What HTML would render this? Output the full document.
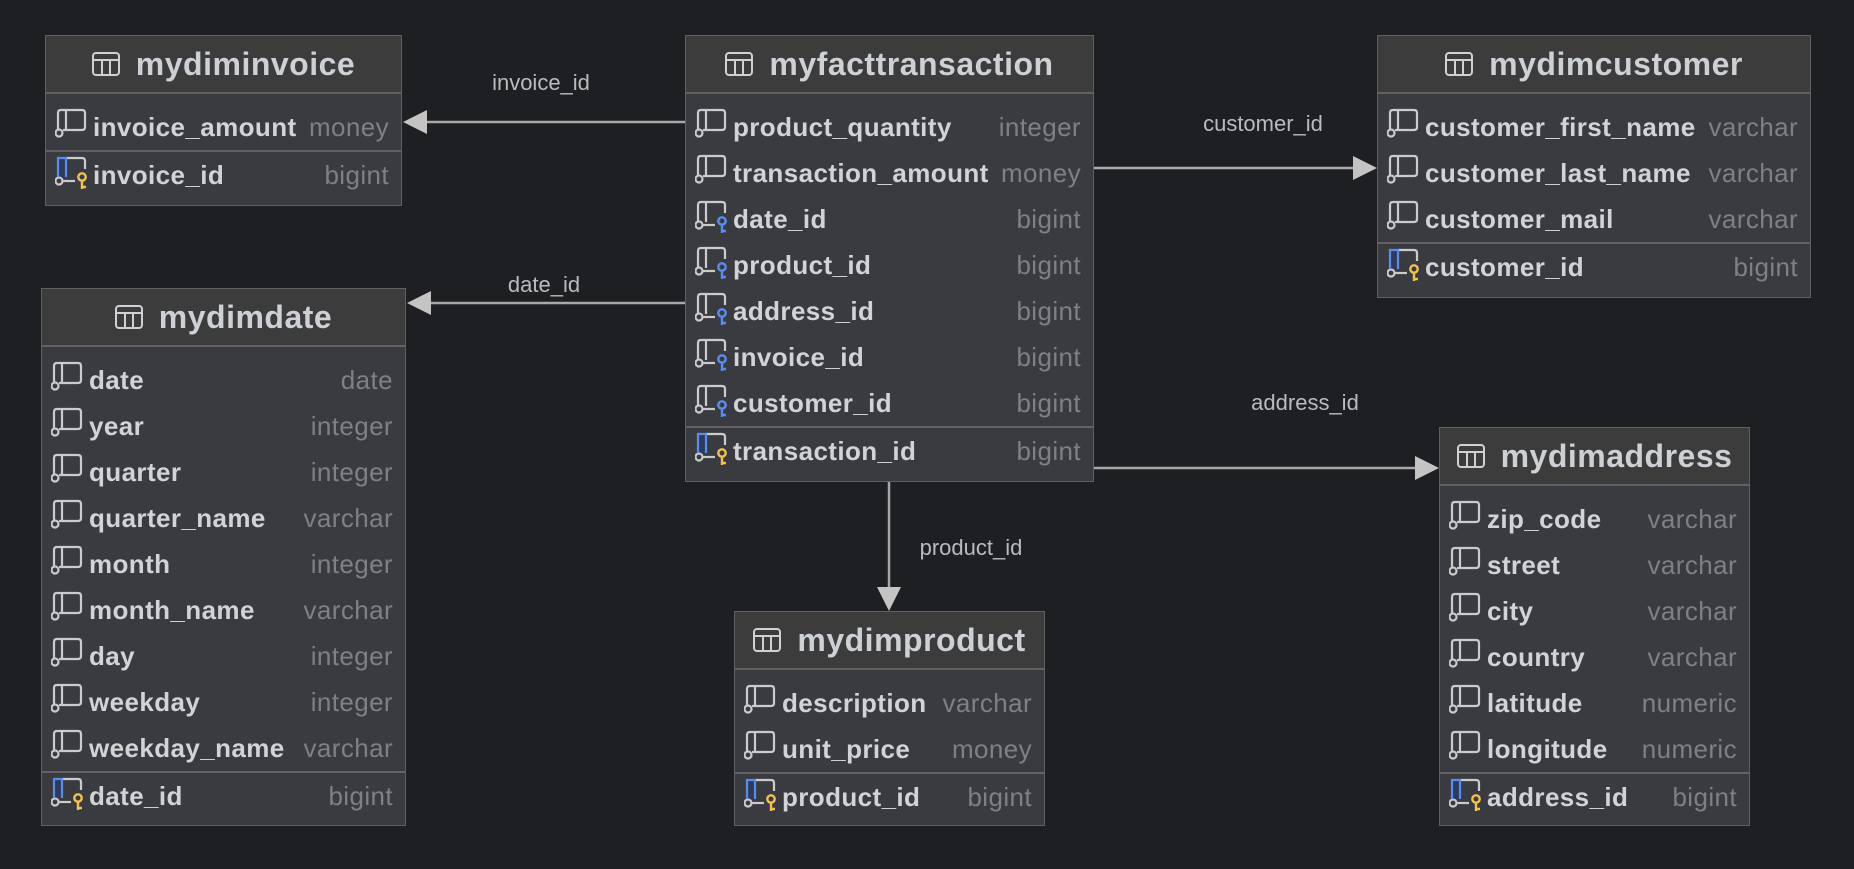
<!DOCTYPE html>
<html><head><meta charset="utf-8"><style>
*{margin:0;padding:0;box-sizing:border-box}
body{width:1854px;height:869px;background:#1e1f22;position:relative;overflow:hidden;font-family:"Liberation Sans",sans-serif}
.box{position:absolute;background:#393b40;border:1px solid #5e6064}
.hd{height:58px;background:#3c3c3c;border-bottom:2px solid #626262;display:flex;align-items:center;justify-content:center;color:#cdd0d4;font-size:32px;font-weight:bold;letter-spacing:.5px}
.hd svg{margin-right:16px}
.bd{padding:10px 0 9px}
.r{height:46px;position:relative;display:flex;align-items:center;font-size:26px;letter-spacing:.4px}
.r svg{position:absolute;left:9px;top:4px}
.r .n{position:absolute;left:47px;color:#d2d3d5;font-weight:bold}
.r .t{position:absolute;right:12px;color:#7e8084}
.sep{height:2px;background:#626262;margin:0}
.lbl{position:absolute;color:#b9bbbe;font-size:22px;transform:translate(-50%,-50%);white-space:nowrap}
</style></head><body>
<svg width="1854" height="869" style="position:absolute;left:0;top:0">
<g stroke="#a8a8a8" stroke-width="2.5" fill="none">
<line x1="685" y1="122" x2="420" y2="122"/>
<line x1="685" y1="303" x2="424" y2="303"/>
<line x1="1094" y1="168" x2="1360" y2="168"/>
<line x1="1094" y1="468" x2="1422" y2="468"/>
<line x1="889" y1="482" x2="889" y2="594"/>
</g>
<g fill="#c4c4c4">
<polygon points="403,122 427,110 427,134"/>
<polygon points="407,303 431,291 431,315"/>
<polygon points="1377,168 1353,156 1353,180"/>
<polygon points="1439,468 1415,456 1415,480"/>
<polygon points="889,611 877,587 901,587"/>
</g>
</svg>
<div class="lbl" style="left:541px;top:83px">invoice_id</div>
<div class="lbl" style="left:544px;top:285px">date_id</div>
<div class="lbl" style="left:1263px;top:124px">customer_id</div>
<div class="lbl" style="left:1305px;top:403px">address_id</div>
<div class="lbl" style="left:971px;top:548px">product_id</div>

<svg width="0" height="0" style="position:absolute">
<defs>
<symbol id="tb" viewBox="0 0 28 24"><g fill="none" stroke="#cfd1d4" stroke-width="2"><rect x="1" y="1" width="26" height="22" rx="3"/><line x1="1" y1="8" x2="27" y2="8"/><line x1="10" y1="8" x2="10" y2="23"/><line x1="18" y1="8" x2="18" y2="23"/></g></symbol>
<symbol id="f" viewBox="0 0 34 36"><g fill="none" stroke="#cbcbcb" stroke-width="2.2"><path d="M3 21 V5 Q3 2 6 2 H27 Q30 2 30 5 V19 Q30 22 27 22 H8"/><path d="M11 2 V22"/><circle cx="4" cy="25" r="3.5"/></g></symbol>
<symbol id="fk" viewBox="0 0 34 36"><g fill="none" stroke="#cbcbcb" stroke-width="2.2"><path d="M3 21 V5 Q3 2 6 2 H27 Q30 2 30 5 V13"/><path d="M11 2 V22"/><path d="M8 25 H20"/><circle cx="4" cy="25" r="3.5"/></g><g fill="none" stroke="#5a8cf0" stroke-width="2.4"><circle cx="27" cy="21" r="3.7"/><path d="M27 24.7 V33 M27 31 H31"/></g></symbol>
<symbol id="pk" viewBox="0 0 34 36"><rect x="3" y="2" width="8" height="19" fill="#2d3a5c"/><g fill="none" stroke="#cbcbcb" stroke-width="2.2"><path d="M11 2 H27 Q30 2 30 5 V13"/><path d="M8 25 H20"/><circle cx="4" cy="25" r="3.5"/></g><path d="M3 21 V2 H11 V21" fill="none" stroke="#5a8cf0" stroke-width="2.2"/><g fill="none" stroke="#f2c14e" stroke-width="2.4"><circle cx="27" cy="21" r="3.7"/><path d="M27 24.7 V33 M27 31 H31"/></g></symbol>
</defs></svg>

<!-- mydiminvoice -->
<div class="box" style="left:45px;top:35px;width:357px;height:171px">
<div class="hd"><svg width="28" height="24"><use href="#tb"/></svg>mydiminvoice</div>
<div class="bd">
<div class="r"><svg width="34" height="36"><use href="#f"/></svg><span class="n">invoice_amount</span><span class="t">money</span></div>
<div class="sep"></div>
<div class="r"><svg width="34" height="36"><use href="#pk"/></svg><span class="n">invoice_id</span><span class="t">bigint</span></div>
</div></div>

<!-- myfacttransaction -->
<div class="box" style="left:685px;top:35px;width:409px;height:447px">
<div class="hd"><svg width="28" height="24"><use href="#tb"/></svg>myfacttransaction</div>
<div class="bd">
<div class="r"><svg width="34" height="36"><use href="#f"/></svg><span class="n">product_quantity</span><span class="t">integer</span></div>
<div class="r"><svg width="34" height="36"><use href="#f"/></svg><span class="n">transaction_amount</span><span class="t">money</span></div>
<div class="r"><svg width="34" height="36"><use href="#fk"/></svg><span class="n">date_id</span><span class="t">bigint</span></div>
<div class="r"><svg width="34" height="36"><use href="#fk"/></svg><span class="n">product_id</span><span class="t">bigint</span></div>
<div class="r"><svg width="34" height="36"><use href="#fk"/></svg><span class="n">address_id</span><span class="t">bigint</span></div>
<div class="r"><svg width="34" height="36"><use href="#fk"/></svg><span class="n">invoice_id</span><span class="t">bigint</span></div>
<div class="r"><svg width="34" height="36"><use href="#fk"/></svg><span class="n">customer_id</span><span class="t">bigint</span></div>
<div class="sep"></div>
<div class="r"><svg width="34" height="36"><use href="#pk"/></svg><span class="n">transaction_id</span><span class="t">bigint</span></div>
</div></div>

<!-- mydimcustomer -->
<div class="box" style="left:1377px;top:35px;width:434px;height:263px">
<div class="hd"><svg width="28" height="24"><use href="#tb"/></svg>mydimcustomer</div>
<div class="bd">
<div class="r"><svg width="34" height="36"><use href="#f"/></svg><span class="n">customer_first_name</span><span class="t">varchar</span></div>
<div class="r"><svg width="34" height="36"><use href="#f"/></svg><span class="n">customer_last_name</span><span class="t">varchar</span></div>
<div class="r"><svg width="34" height="36"><use href="#f"/></svg><span class="n">customer_mail</span><span class="t">varchar</span></div>
<div class="sep"></div>
<div class="r"><svg width="34" height="36"><use href="#pk"/></svg><span class="n">customer_id</span><span class="t">bigint</span></div>
</div></div>

<!-- mydimdate -->
<div class="box" style="left:41px;top:288px;width:365px;height:538px">
<div class="hd"><svg width="28" height="24"><use href="#tb"/></svg>mydimdate</div>
<div class="bd">
<div class="r"><svg width="34" height="36"><use href="#f"/></svg><span class="n">date</span><span class="t">date</span></div>
<div class="r"><svg width="34" height="36"><use href="#f"/></svg><span class="n">year</span><span class="t">integer</span></div>
<div class="r"><svg width="34" height="36"><use href="#f"/></svg><span class="n">quarter</span><span class="t">integer</span></div>
<div class="r"><svg width="34" height="36"><use href="#f"/></svg><span class="n">quarter_name</span><span class="t">varchar</span></div>
<div class="r"><svg width="34" height="36"><use href="#f"/></svg><span class="n">month</span><span class="t">integer</span></div>
<div class="r"><svg width="34" height="36"><use href="#f"/></svg><span class="n">month_name</span><span class="t">varchar</span></div>
<div class="r"><svg width="34" height="36"><use href="#f"/></svg><span class="n">day</span><span class="t">integer</span></div>
<div class="r"><svg width="34" height="36"><use href="#f"/></svg><span class="n">weekday</span><span class="t">integer</span></div>
<div class="r"><svg width="34" height="36"><use href="#f"/></svg><span class="n">weekday_name</span><span class="t">varchar</span></div>
<div class="sep"></div>
<div class="r"><svg width="34" height="36"><use href="#pk"/></svg><span class="n">date_id</span><span class="t">bigint</span></div>
</div></div>

<!-- mydimproduct -->
<div class="box" style="left:734px;top:611px;width:311px;height:215px">
<div class="hd"><svg width="28" height="24"><use href="#tb"/></svg>mydimproduct</div>
<div class="bd">
<div class="r"><svg width="34" height="36"><use href="#f"/></svg><span class="n">description</span><span class="t">varchar</span></div>
<div class="r"><svg width="34" height="36"><use href="#f"/></svg><span class="n">unit_price</span><span class="t">money</span></div>
<div class="sep"></div>
<div class="r"><svg width="34" height="36"><use href="#pk"/></svg><span class="n">product_id</span><span class="t">bigint</span></div>
</div></div>

<!-- mydimaddress -->
<div class="box" style="left:1439px;top:427px;width:311px;height:399px">
<div class="hd"><svg width="28" height="24"><use href="#tb"/></svg>mydimaddress</div>
<div class="bd">
<div class="r"><svg width="34" height="36"><use href="#f"/></svg><span class="n">zip_code</span><span class="t">varchar</span></div>
<div class="r"><svg width="34" height="36"><use href="#f"/></svg><span class="n">street</span><span class="t">varchar</span></div>
<div class="r"><svg width="34" height="36"><use href="#f"/></svg><span class="n">city</span><span class="t">varchar</span></div>
<div class="r"><svg width="34" height="36"><use href="#f"/></svg><span class="n">country</span><span class="t">varchar</span></div>
<div class="r"><svg width="34" height="36"><use href="#f"/></svg><span class="n">latitude</span><span class="t">numeric</span></div>
<div class="r"><svg width="34" height="36"><use href="#f"/></svg><span class="n">longitude</span><span class="t">numeric</span></div>
<div class="sep"></div>
<div class="r"><svg width="34" height="36"><use href="#pk"/></svg><span class="n">address_id</span><span class="t">bigint</span></div>
</div></div>
</body></html>
